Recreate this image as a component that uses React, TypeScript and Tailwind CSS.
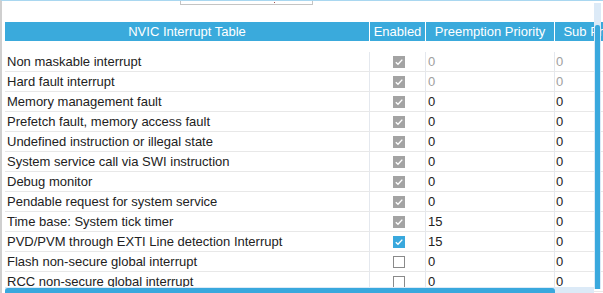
import React from "react";

type Row = { name: string; state: "dis" | "on" | "off"; pre: string; sub: string; grey?: boolean };

const rows: Row[] = [
  { name: "Non maskable interrupt", state: "dis", pre: "0", sub: "0", grey: true },
  { name: "Hard fault interrupt", state: "dis", pre: "0", sub: "0", grey: true },
  { name: "Memory management fault", state: "dis", pre: "0", sub: "0" },
  { name: "Prefetch fault, memory access fault", state: "dis", pre: "0", sub: "0" },
  { name: "Undefined instruction or illegal state", state: "dis", pre: "0", sub: "0" },
  { name: "System service call via SWI instruction", state: "dis", pre: "0", sub: "0" },
  { name: "Debug monitor", state: "dis", pre: "0", sub: "0" },
  { name: "Pendable request for system service", state: "dis", pre: "0", sub: "0" },
  { name: "Time base: System tick timer", state: "dis", pre: "15", sub: "0" },
  { name: "PVD/PVM through EXTI Line detection Interrupt", state: "on", pre: "15", sub: "0" },
  { name: "Flash non-secure global interrupt", state: "off", pre: "0", sub: "0" },
  { name: "RCC non-secure global interrupt", state: "off", pre: "0", sub: "0" },
];

function Check({ state }: { state: Row["state"] }) {
  if (state === "off") {
    return <div className="w-[12px] h-[12px] border-[1.5px] border-[#8a8a8a] bg-white" />;
  }
  return (
    <div className={`w-[12px] h-[12px] flex items-center justify-center ${state === "on" ? "bg-[#39a8dd]" : "bg-[#a3a3a3]"}`}>
      <svg width="10" height="10" viewBox="0 0 10 10">
        <path d="M1.8 5.2 L4 7.3 L8.3 2.6" fill="none" stroke="white" strokeWidth="1.4" />
      </svg>
    </div>
  );
}

export default function App() {
  return (
    <div
      className="w-[603px] h-[293px] relative overflow-hidden bg-white border-t border-[#a9d7f0] border-l-[2px] border-l-[#cfcfcf]"
      style={{ fontFamily: '"Liberation Sans", Arial, sans-serif' }}
    >
      {/* top input box */}
      <div className="h-[21px] relative">
        <div className="absolute left-[178px] top-0 w-[133px] h-[4px] border-l border-r border-b border-[#c4c4c4]">
          <div className="absolute left-[93px] top-[1px] w-[1px] h-[1px] bg-[#a05050]" />
        </div>
      </div>
      <div className="ml-[3px] w-[640px] text-[13px]">
        {/* header */}
        <div className="flex h-[19px] bg-[#3aaadc] text-white leading-[19px]">
          <div className="w-[364px] text-center">NVIC Interrupt Table</div>
          <div className="w-[1px] bg-white" />
          <div className="w-[55px] text-center">Enabled</div>
          <div className="w-[1px] bg-white" />
          <div className="w-[128px] text-center">Preemption Priority</div>
          <div className="w-[1px] bg-white" />
          <div className="w-[84px] text-center whitespace-nowrap">Sub Priority</div>
        </div>
        <div className="h-[11px]" />
        {rows.map((r, i) => (
          <div key={i} className="flex h-[20px] border-b border-[#e8e8e8] leading-[19px] text-[#222]">
            <div className="w-[364px] pl-[2px] whitespace-nowrap">{r.name}</div>
            <div className="w-[1px] bg-[#e4e8ee]" />
            <div className="w-[55px] flex items-center justify-center pl-[3px]">
              <Check state={r.state} />
            </div>
            <div className="w-[1px] bg-[#e4e8ee]" />
            <div className={`w-[128px] pl-[2px] ${r.grey ? "text-[#a0a0a0]" : ""}`}>{r.pre}</div>
            <div className="w-[1px] bg-[#e4e8ee]" />
            <div className={`w-[84px] pl-[1px] ${r.grey ? "text-[#a0a0a0]" : ""}`}>{r.sub}</div>
          </div>
        ))}
      </div>
      {/* vertical scrollbar */}
      <div className="absolute left-[592px] top-[2px] w-[7px] h-[286px] bg-[#dceaf7]">
        <div className="absolute left-[1px] top-[22px] w-[5px] h-[264px] bg-[#39a8dd] rounded-t-[2px]" />
      </div>
      {/* horizontal scrollbar */}
      <div className="absolute left-[3px] top-[286px] w-[589px] h-[6px] bg-[#dceaf7]">
        <div className="absolute left-0 top-[1px] w-[550px] h-[5px] bg-[#39a8dd] rounded-tl-[3px] rounded-tr-[3px]" />
      </div>
    </div>
  );
}
